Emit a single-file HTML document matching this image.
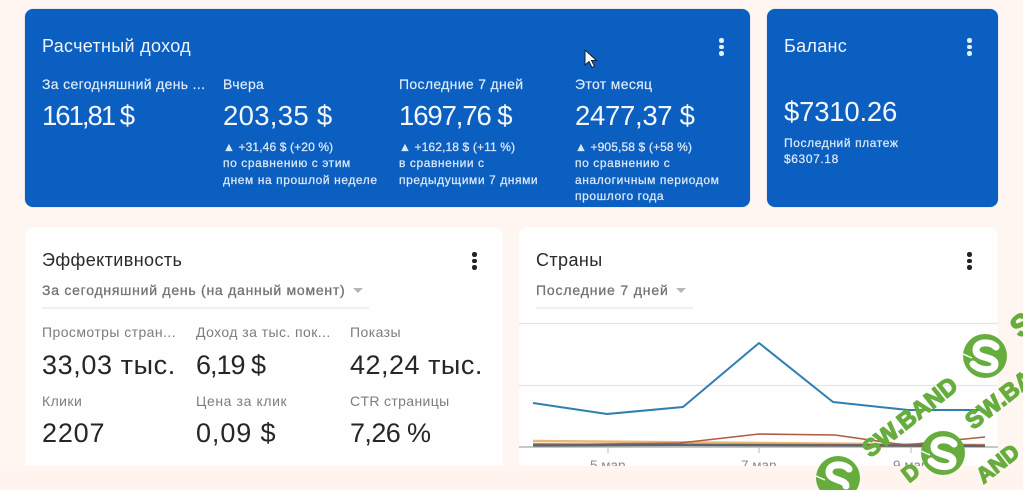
<!DOCTYPE html>
<html lang="ru"><head><meta charset="utf-8"><title>Dashboard</title>
<style>
html,body{margin:0;padding:0;width:1023px;height:490px;overflow:hidden}
body{position:relative;background:#fff6f2;font-family:"Liberation Sans",sans-serif}
#p{position:absolute;left:0;top:0;width:1023px;height:490px;overflow:hidden;filter:blur(.35px)}
.a{position:absolute;white-space:nowrap}
.card{position:absolute;border-radius:8px}
.blue{background:#0b5fc1;box-shadow:0 0 1px #6ea4e0}
.white{background:#fefefe;border-radius:8px 8px 0 0;box-shadow:0 0 1px #e8e8e8}
.w{color:#f0f5fc}
.ttl{font-size:18px;letter-spacing:.3px}
.lab{font-size:14px;color:#e3edf9;letter-spacing:.33px;-webkit-text-stroke:.15px #e3edf9}
.big{font-size:27.5px;color:#f4f8fd}
.sm{font-size:12px;line-height:16.3px;color:#dce8f7;letter-spacing:.58px;-webkit-text-stroke:.25px #dce8f7}
.sm b{font-weight:400;letter-spacing:.13px}
.dots i{position:absolute;left:0;width:4.5px;height:4.5px;border-radius:50%}
.dots{position:absolute;width:5px;height:20px}
.dots i:nth-child(1){top:0}.dots i:nth-child(2){top:6.5px}.dots i:nth-child(3){top:13px}
.wd i{background:#e6effa}.bd i{background:#222}
.glab{font-size:14px;color:#7d7d7d;letter-spacing:.43px}
.gval{font-size:27px;color:#262626}
.sel{font-size:14px;color:#737373;letter-spacing:.75px;-webkit-text-stroke:.3px #737373}
.arr{position:absolute;width:0;height:0;border-left:5px solid transparent;border-right:5px solid transparent;border-top:5px solid #b5b5b5}
.ln{position:absolute;height:1.5px;background:#efefef}
</style></head><body><div id="p">

<div class="card blue" style="left:25px;top:9px;width:725px;height:198px"></div>
<div class="card blue" style="left:767px;top:9px;width:231px;height:198px"></div>

<div class="a w ttl" style="left:42px;top:36px">Расчетный доход</div>
<div class="dots wd" style="left:719px;top:38px"><i></i><i></i><i></i></div>

<div class="a lab" style="left:42px;top:76px">За сегодняшний день ...</div>
<div class="a big" style="left:42px;top:100px;letter-spacing:-2px">161,81 $</div>

<div class="a lab" style="left:223px;top:76px">Вчера</div>
<div class="a big" style="left:223px;top:100px;letter-spacing:.3px">203,35 $</div>
<div class="a sm" style="left:223px;top:139px"><b>▲ +31,46 $ (+20 %)</b><br>по сравнению с этим<br>днем на прошлой неделе</div>

<div class="a lab" style="left:399px;top:76px">Последние 7 дней</div>
<div class="a big" style="left:399px;top:100px;letter-spacing:-1.1px">1697,76 $</div>
<div class="a sm" style="left:399px;top:139px"><b>▲ +162,18 $ (+11 %)</b><br>в сравнении с<br>предыдущими 7 днями</div>

<div class="a lab" style="left:575px;top:76px">Этот месяц</div>
<div class="a big" style="left:575px;top:100px;letter-spacing:-.3px">2477,37 $</div>
<div class="a sm" style="left:575px;top:139px"><b>▲ +905,58 $ (+58 %)</b><br>по сравнению с<br>аналогичным периодом<br>прошлого года</div>

<svg class="a" style="left:583px;top:48px" width="16" height="22" viewBox="0 0 16 22"><path d="M2 2v15l4-3.500 3 6 2.500-1.200-3-5.800h5z" fill="#fff" stroke="#123" stroke-width="1"/></svg>

<div class="a w ttl" style="left:784px;top:36px">Баланс</div>
<div class="dots wd" style="left:967px;top:38px"><i></i><i></i><i></i></div>
<div class="a big" style="left:784px;top:96px;letter-spacing:-.2px">$7310.26</div>
<div class="a sm" style="left:784px;top:135px;letter-spacing:.6px">Последний платеж<br>$6307.18</div>

<div class="card white" style="left:25px;top:227px;width:478px;height:239px"></div>
<div class="card white" style="left:519px;top:227px;width:479px;height:239px"></div>

<div class="a" style="left:42px;top:250px;font-size:18px;color:#2a2a2a;letter-spacing:.4px">Эффективность</div>
<div class="dots bd" style="left:472px;top:252px"><i></i><i></i><i></i></div>
<div class="a sel" style="left:42px;top:282px">За сегодняшний день (на данный момент)</div>
<div class="arr" style="left:353px;top:288px"></div>
<div class="ln" style="left:42px;top:307px;width:327px"></div>

<div class="a glab" style="left:42px;top:324px">Просмотры стран...</div>
<div class="a gval" style="left:42px;top:350px;letter-spacing:.6px">33,03 тыс.</div>
<div class="a glab" style="left:196px;top:324px">Доход за тыс. пок...</div>
<div class="a gval" style="left:196px;top:350px;letter-spacing:-1px">6,19 $</div>
<div class="a glab" style="left:350px;top:324px">Показы</div>
<div class="a gval" style="left:350px;top:350px;letter-spacing:.5px">42,24 тыс.</div>
<div class="a glab" style="left:42px;top:393px">Клики</div>
<div class="a gval" style="left:42px;top:418px;letter-spacing:.8px">2207</div>
<div class="a glab" style="left:196px;top:393px;letter-spacing:.6px">Цена за клик</div>
<div class="a gval" style="left:196px;top:418px;letter-spacing:.9px">0,09 $</div>
<div class="a glab" style="left:350px;top:393px;letter-spacing:.35px">CTR страницы</div>
<div class="a gval" style="left:350px;top:418px;letter-spacing:-.6px">7,26 %</div>

<div class="a" style="left:536px;top:250px;font-size:18px;color:#2a2a2a;letter-spacing:.4px">Страны</div>
<div class="dots bd" style="left:967px;top:252px"><i></i><i></i><i></i></div>
<div class="a sel" style="left:536px;top:282px;letter-spacing:.85px">Последние 7 дней</div>
<div class="arr" style="left:676px;top:288px"></div>
<div class="ln" style="left:536px;top:307px;width:157px"></div>

<svg class="a" style="left:519px;top:315px" width="479" height="152" viewBox="519 315 479 152">
<line x1="519" y1="323.500" x2="998" y2="323.500" stroke="#e6e6e6" stroke-width="1.200"/>
<line x1="519" y1="385.500" x2="998" y2="385.500" stroke="#e6e6e6" stroke-width="1.200"/>
<line x1="519" y1="447" x2="998" y2="447" stroke="#b5b5b5" stroke-width="1.500"/>
<line x1="608" y1="447" x2="608" y2="453" stroke="#bbb"/><line x1="759" y1="447" x2="759" y2="453" stroke="#bbb"/><line x1="911" y1="447" x2="911" y2="453" stroke="#bbb"/>
<path d="M533 441L650 442 985 445" stroke="#eab774" stroke-width="2.500" fill="none"/>
<path d="M533 444L985 445" stroke="#a9603e" stroke-width="1.500" fill="none"/>
<path d="M533 445L680 443 759 434 835 435 905 445 985 437" stroke="#ad5f43" stroke-width="1.600" fill="none"/>
<path d="M533 445.500L680 445 985 446" stroke="#5b6670" stroke-width="2.200" fill="none"/>
<path d="M533 403L607 414 683 407 759 343 833 402 908 410 985 410" stroke="#2f7fb0" stroke-width="2" fill="none" stroke-linejoin="round"/>
<text x="590" y="470" font-size="13.500" fill="#8a8a8a" font-family="Liberation Sans">5 мар</text>
<text x="741" y="470" font-size="13.500" fill="#8a8a8a" font-family="Liberation Sans">7 мар</text>
<text x="893" y="470" font-size="13.500" fill="#8a8a8a" font-family="Liberation Sans">9 мар</text>
</svg>

<div class="a" style="left:0;top:466px;width:1023px;height:24px;background:#fff4ee"></div>

<svg class="a" style="left:0;top:0" width="1023" height="490" viewBox="0 0 1023 490" font-family="Liberation Sans" font-weight="700">
<g fill="#66ad3e" stroke="#66ad3e" stroke-width="1.300" font-size="24" text-anchor="middle">
<text x="910" y="425" transform="rotate(-38 910 417)">SW.BAND</text>
<text x="1013" y="397" transform="rotate(-38 1013 389)">SW.BAND</text>
<text x="998" y="471" font-size="22" transform="rotate(-38 998 464)">AND</text>
<text x="911" y="480" font-size="22" transform="rotate(-38 911 473)">D</text>
<text x="1022" y="335" font-size="30" transform="rotate(-38 1022 325)">S</text>
</g>
<circle cx="985" cy="356" r="22" fill="#66ad3e"/>
<circle cx="943" cy="453" r="22" fill="#66ad3e"/>
<path d="M819.600 490A22 22 0 1 1 856.400 490Z" fill="#66ad3e"/>
<g fill="none" stroke="#fff" stroke-width="7" stroke-linecap="round">
<path d="M996 347C991 341 976 341 976 350C976 359 995 356 995 364C995 372 979 371 973 364"/>
<path d="M954 444C949 438 934 438 934 447C934 456 953 453 953 461C953 469 937 468 931 461"/>
<path d="M849 469C844 463 829 463 829 472C829 481 846 479 846 486"/>
</g>
<g stroke="#fff" stroke-width="1.500"><path d="M963 354L972 358"/><path d="M921 451L930 455"/><path d="M816 476L825 480"/></g>
</svg>
</div></body></html>
